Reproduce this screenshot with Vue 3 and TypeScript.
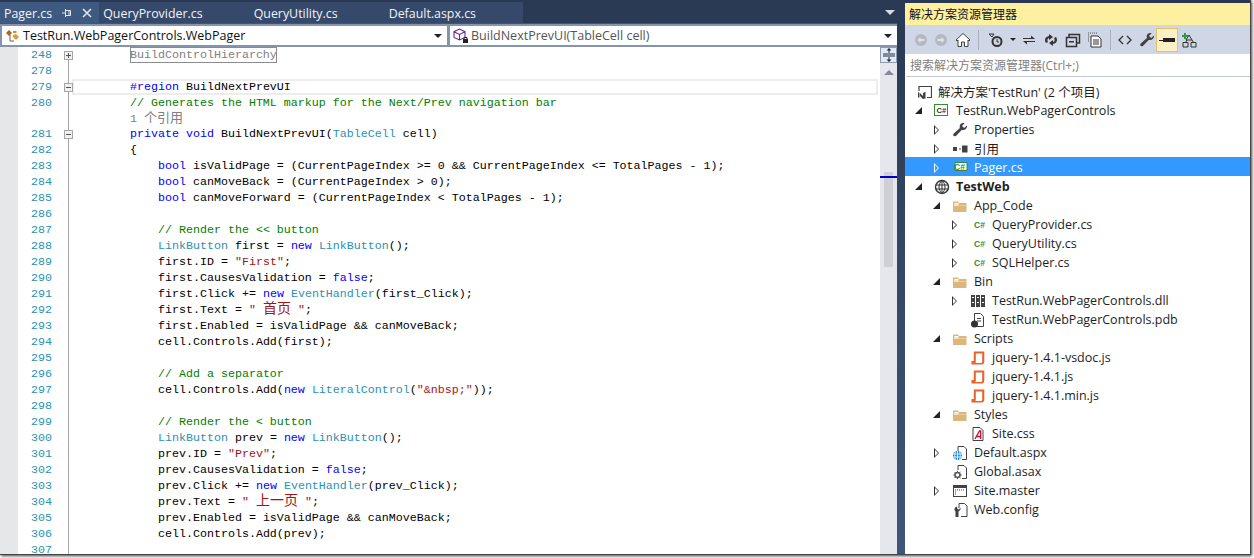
<template>
  <div class="shot">
    <svg class="sprite" width="0" height="0">
      <defs>
        <symbol id="i-folder" viewBox="0 0 16 16">
          <path d="M1 3.500h5l1 1.500h7.500v9H1z" fill="#dcb67a" />
          <path d="M2 6h5l-1 1.500h8v.5H2z" fill="#f4e4c4" />
          <path d="M2.500 5h3.500l1 1H2.500z" fill="#fff" />
        </symbol>
        <symbol id="i-csproj" viewBox="0 0 16 16">
          <rect x=".5" y="1.500" width="13" height="11" fill="#fff" stroke="#388a34" />
          <text x="2.600" y="10" font-size="7.500" font-weight="700" fill="#333" font-family="Liberation Sans">C#</text>
        </symbol>
        <symbol id="i-cs" viewBox="0 0 16 16">
          <text x="4" y="10.500" font-size="8.500" font-weight="700" fill="#388a34" font-family="Liberation Sans">C#</text>
        </symbol>
        <symbol id="i-csfile" viewBox="0 0 16 16">
          <path d="M3 2.500h12v8H3z" fill="#fff" stroke="#388a34" />
          <text x="2" y="10" font-size="8.500" font-weight="700" fill="#388a34" font-family="Liberation Sans">C#</text>
        </symbol>
        <symbol id="i-wrench" viewBox="0 0 16 16">
          <path d="M15 3.500 12.200 6 10 4l2.600-2.700C10.400.5 8 1.600 7.700 4c-.1.7 0 1.300.2 1.900L1.500 11.800c-1.200 1.500.9 3.400 2.400 2.100l5.800-6c2.800.8 5.700-1.300 5.300-4.400z" fill="#424242" />
        </symbol>
        <symbol id="i-ref" viewBox="0 0 16 16">
          <path d="M1 6h4v4H1zM7 7.500h2v1H7zM10 4.500h5.500v7H10z" fill="#424242" />
        </symbol>
        <symbol id="i-globe" viewBox="0 0 16 16">
          <circle cx="8" cy="8" r="6.500" fill="#fff" stroke="#333" stroke-width="1.400" />
          <path d="M1.500 6h13M1.500 10h13M8 1.500v13M8 1.500c-4 3.500-4 9.500 0 13M8 1.500c4 3.500 4 9.500 0 13" fill="none" stroke="#333" />
        </symbol>
        <symbol id="i-dll" viewBox="0 0 16 16">
          <path d="M1 2h4v12H1zM6 2h4v12H6zM11 2h4v12h-4z" fill="#424242" />
          <path d="M2 4h2v1H2zM7 4h2v1H7zM12 4h2v1h-2zM2 9h2v1H2zM7 9h2v1H7zM12 9h2v1h-2z" fill="#fff" />
        </symbol>
        <symbol id="i-pdb" viewBox="0 0 16 16">
          <path d="M4.500 1.500h6l3 3v10h-9z" fill="#fff" stroke="#424242" />
          <path d="M7 6h4v1H7zM7 8.500h4v1H7z" fill="#424242" />
          <circle cx="4.500" cy="12" r="3.500" fill="#333" />
        </symbol>
        <symbol id="i-js" viewBox="0 0 16 16">
          <path d="M1.500 14.500V11h2.300V1.500h10.500V11c0 2.500-1 3.500-2.500 3.500zM5.800 3.500V11.500c0 .6-.1 1.100-.3 1.500h6c.4-.4.700-1 .700-2V3.500z" fill="#e8622c" />
        </symbol>
        <symbol id="i-css" viewBox="0 0 16 16">
          <path d="M3 1.500h7l3 3v10H3z" fill="#fff" stroke="#424242" />
          <path d="M5 13 9.500 5h1.200v8M7 10.500h3.700" fill="none" stroke="#c8102e" stroke-width="1.300" />
        </symbol>
        <symbol id="i-aspx" viewBox="0 0 16 16">
          <path d="M6 6V1.500h6l2.500 2.500v10.500H10" fill="#fff" stroke="#424242" />
          <circle cx="5.500" cy="10.500" r="4.500" fill="#1e88d8" />
          <path d="M1 9h9M1 12h9M5.500 6v9M3.500 6.500c-1 2.500-1 5.500 0 8M7.500 6.500c1 2.500 1 5.500 0 8" fill="none" stroke="#fff" stroke-width=".8" />
        </symbol>
        <symbol id="i-asax" viewBox="0 0 16 16">
          <path d="M6 6V1.500h6l2.500 2.500v10.500H10" fill="#fff" stroke="#424242" />
          <circle cx="5.500" cy="11" r="2.500" fill="none" stroke="#5a5a5a" stroke-width="1.600" />
          <path d="M5.500 6.800v2M5.500 13.200v2M1.300 11h2M7.700 11h2M2.500 8l1.400 1.400M7 12.600 8.500 14M8.500 8 7 9.400M3.900 12.600 2.500 14" stroke="#5a5a5a" />
        </symbol>
        <symbol id="i-master" viewBox="0 0 16 16">
          <rect x="1.500" y="2.500" width="13" height="11" fill="#fff" stroke="#424242" />
          <path d="M1.500 2.500h13v2.500h-13z" fill="#424242" />
          <path d="M3 7h1M5 7h1M7 7h1M9 7h1M11 7h1M3 9h1M3 11h1" stroke="#424242" />
        </symbol>
        <symbol id="i-config" viewBox="0 0 16 16">
          <path d="M7 6V1.500h5.500L15 4v10.500H9" fill="#fff" stroke="#424242" />
          <path d="M8.500 5.500 7 7.500 5.500 7 5 4.500C2.500 5 1.500 7.500 3.500 9.500v5.500h3V9.500c1.800-1 2.200-2.500 2-4z" fill="#424242" />
        </symbol>
        <symbol id="i-solution" viewBox="0 0 16 16">
          <path d="M3 7V2.500h12.500v11H11" fill="none" stroke="#424242" stroke-width="1.200" />
          <path d="M2 8v6l1.500-1V9zM4 9l3 3V9l2.500-1.200v6.700L7 15l-3-3z" fill="#424242" />
        </symbol>
      </defs>
    </svg>

    <div class="frame">
      <section class="doc">
        <div class="tabstrip">
          <div class="tabs">
            <div v-for="(t, i) in tabs" :key="t" class="tab" :class="{ active: i === 0 }">
              <span>{{ t }}</span>
              <span class="tab-tools">
                <svg v-if="i === 0" width="12" height="12" viewBox="0 0 12 12">
                  <path d="M1 6h3M4.500 3.500h5v5h-5zM4.500 2v8M8 3.500v5" fill="none" stroke="#dfe6f0" />
                </svg>
                <svg v-if="i === 0" width="12" height="12" viewBox="0 0 12 12">
                  <path d="M2 2l8 8M10 2l-8 8" stroke="#dfe6f0" stroke-width="1.600" />
                </svg>
              </span>
            </div>
          </div>
          <i class="strip-drop"></i>
        </div>
        <div class="navbar">
          <div class="combo first">
            <svg width="16" height="16" viewBox="0 0 16 16">
              <path d="M1 5l3-3 3 3-3 3z" fill="#a8652a" />
              <path d="M8 3h3l1 1-1 1H8z" fill="#d98a2f" />
              <path d="M8 7l3-1 3 3-3 3-3-3z" fill="#e09a3c" />
              <path d="M5 7v6h4" fill="none" stroke="#8a5a2a" />
            </svg>
            <span class="combo-text">TestRun.WebPagerControls.WebPager</span>
            <i class="drop"></i>
          </div>
          <div class="combo second">
            <svg width="16" height="16" viewBox="0 0 16 16">
              <path d="M6.500 1 12 3.700v5.800L6.500 12 1 9.500V3.700zM1 3.700l5.500 2.800L12 3.700M6.500 6.500V12" fill="#fff" stroke="#6a2c91" stroke-width="1.100" />
              <rect x="10" y="11" width="5" height="4" fill="#222" />
              <path d="M11 11V9.500h3V11" fill="none" stroke="#222" />
            </svg>
            <span class="combo-text dim">BuildNextPrevUI(TableCell cell)</span>
            <i class="drop"></i>
          </div>
        </div>
        <div class="editor">
          <div class="code">
            <div
              v-for="(l, i) in codeLines"
              :key="i"
              class="line"
              :class="{ current: l.no === '279', short: l.no === '' }"
            >
              <span class="no">{{ l.no }}</span>
              <span class="fold" :class="{ start: i === 0 }">
                <i v-if="l.fold" class="fold-box" :class="{ plus: l.fold === '+' }"></i>
              </span>
              <span class="src"><span v-for="(t, j) in l.tokens" :key="j" :class="t.cls">{{ t.text }}</span></span>
            </div>
          </div>
          <div class="vscroll">
            <div class="split">
              <svg width="14" height="14" viewBox="0 0 14 14">
                <path d="M1 6h12M1 8h12" stroke="#1f2a3f" />
                <path d="M7 0l2.500 2.500h-2V5h-1V2.500h-2zM7 14l2.500-2.500h-2V9h-1v2.500h-2z" fill="#1f2a3f" />
              </svg>
            </div>
            <i class="up"></i>
            <div class="thumb"></div>
            <i class="caret-mark"></i>
          </div>
        </div>
      </section>

      <aside class="panel">
        <div class="panel-title">解决方案资源管理器</div>
        <div class="toolbar">
          <svg class="tb nav" width="16" height="16" viewBox="0 0 16 16"><circle cx="8" cy="8" r="6" fill="#b4b8c0" /><path d="M4.500 8l3-3v2h4v2h-4v2z" fill="#dfe3ec" /></svg>
          <svg class="tb" width="16" height="16" viewBox="0 0 16 16"><circle cx="8" cy="8" r="6" fill="#b4b8c0" /><path d="M11.500 8l-3-3v2h-4v2h4v2z" fill="#dfe3ec" /></svg>
          <svg class="tb" width="16" height="16" viewBox="0 0 16 16"><path d="M8 1.500 15 8l-1 1-1-1v6.500H9.500V10h-3v4.500H3V8L2 9 1 8z" fill="#fff" stroke="#424242" /></svg>
          <i class="tb-sep left"></i>
          <svg class="tb" width="18" height="16" viewBox="0 0 18 16"><circle cx="9" cy="9.500" r="4.500" fill="none" stroke="#333" stroke-width="2" /><path d="M9 7v3h2M1 2h5l-2 3z" fill="none" stroke="#333" /></svg>
          <i class="tb-drop"></i>
          <svg class="tb" width="16" height="16" viewBox="0 0 16 16"><path d="M2 6h8V3.500L14 7H2zM14 10H6v2.500L2 9h12z" fill="#333" /></svg>
          <svg class="tb" width="16" height="16" viewBox="0 0 16 16"><path d="M3 11c-2-3-1-6 3-7V2l4 3-4 3V6C4 6.500 4 8.500 5 10zM13 5c2 3 1 6-3 7v2l-4-3 4-3v2c2-.5 2-2.500 1-4z" fill="#333" /></svg>
          <svg class="tb" width="16" height="16" viewBox="0 0 16 16"><path d="M1.500 5.500h10v9h-10zM4 5V2.500h10.500V11H12" fill="none" stroke="#333" stroke-width="1.500" /><path d="M4 9h5v1.500H4z" fill="#333" /></svg>
          <svg class="tb" width="16" height="16" viewBox="0 0 16 16"><path d="M1 1h1M3 1h1M5 1h1M7 1h1M9 1h1M1 3h1M1 5h1M1 7h1M1 9h1" stroke="#555" /><path d="M4 4h7l3 3v8H4z" fill="#fff" stroke="#333" /><path d="M6 8h6M6 10h6M6 12h6" stroke="#333" /></svg>
          <i class="tb-sep right"></i>
          <svg class="tb" width="16" height="16" viewBox="0 0 16 16"><path d="M6 4 2 8l4 4M10 4l4 4-4 4" fill="none" stroke="#333" stroke-width="1.300" /></svg>
          <svg class="tb" width="16" height="16" viewBox="0 0 16 16"><use href="#i-wrench" /></svg>
          <div class="tb-active">
            <svg width="16" height="16" viewBox="0 0 16 16"><path d="M0 8h4v1H0z" fill="#222" /><path d="M4 6h12v4H4z" fill="#222" /></svg>
          </div>
          <svg class="tb" width="16" height="16" viewBox="0 0 16 16"><path d="M5 8h6L8 3zM2 10.500h5v4.500H2zM10 10.500h5v4.500h-5zM4.500 10.500 6 8M12.500 10.500 11 8" fill="none" stroke="#333" /><path d="M3 1h2v2h2v2H5v2H3V5H1V3h2z" fill="#2e9a3e" /></svg>
        </div>
        <div class="search">搜索解决方案资源管理器(Ctrl+;)</div>
        <div class="tree">
          <div
            v-for="n in nodes"
            :key="n.label"
            class="node"
            :class="{ selected: n.selected, bold: n.bold }"
            :style="{ paddingLeft: (n.level < 0 ? 11 : 8 + n.level * 18) + 'px' }"
          >
            <i v-if="n.level >= 0" class="arrow" :class="n.arrow"></i>
            <svg class="node-icon" width="16" height="16"><use :href="'#i-' + n.icon" /></svg>
            <span>{{ n.label }}</span>
          </div>
        </div>
      </aside>
    </div>
  </div>
</template>

<script setup lang="ts">
interface Token {
  cls: string
  text: string
}

interface TreeNode {
  label: string
  icon: string
  level: number
  arrow?: 'open' | 'closed'
  selected?: boolean
  bold?: boolean
}

const tabs = ['Pager.cs', 'QueryProvider.cs', 'QueryUtility.cs', 'Default.aspx.cs']

const pad = '        '
const rawLines: [string, string, string?][] = [
  ['248', pad + '@@BuildControlHierarchy', '+'],
  ['278', ''],
  ['279', pad + '#region BuildNextPrevUI', '-'],
  ['280', pad + '// Generates the HTML markup for the Next/Prev navigation bar'],
  ['', pad + '%%1 个引用'],
  ['281', pad + 'private void BuildNextPrevUI(TableCell cell)', '-'],
  ['282', pad + '{'],
  ['283', pad + '    bool isValidPage = (CurrentPageIndex >= 0 && CurrentPageIndex <= TotalPages - 1);'],
  ['284', pad + '    bool canMoveBack = (CurrentPageIndex > 0);'],
  ['285', pad + '    bool canMoveForward = (CurrentPageIndex < TotalPages - 1);'],
  ['286', ''],
  ['287', pad + '    // Render the << button'],
  ['288', pad + '    LinkButton first = new LinkButton();'],
  ['289', pad + '    first.ID = "First";'],
  ['290', pad + '    first.CausesValidation = false;'],
  ['291', pad + '    first.Click += new EventHandler(first_Click);'],
  ['292', pad + '    first.Text = " 首页 ";'],
  ['293', pad + '    first.Enabled = isValidPage && canMoveBack;'],
  ['294', pad + '    cell.Controls.Add(first);'],
  ['295', ''],
  ['296', pad + '    // Add a separator'],
  ['297', pad + '    cell.Controls.Add(new LiteralControl("&nbsp;"));'],
  ['298', ''],
  ['299', pad + '    // Render the < button'],
  ['300', pad + '    LinkButton prev = new LinkButton();'],
  ['301', pad + '    prev.ID = "Prev";'],
  ['302', pad + '    prev.CausesValidation = false;'],
  ['303', pad + '    prev.Click += new EventHandler(prev_Click);'],
  ['304', pad + '    prev.Text = " 上一页 ";'],
  ['305', pad + '    prev.Enabled = isValidPage && canMoveBack;'],
  ['306', pad + '    cell.Controls.Add(prev);'],
  ['307', ''],
]

// small highlighter, good enough for the C# on screen
const tokenRe = /("[^"]*")|\b(bool|new|false|private|void)\b|\b(LinkButton|EventHandler|TableCell|LiteralControl)\b/g

function tokenize(src: string): Token[] {
  const indent = src.match(/^ */)![0]
  const body = src.slice(indent.length)
  const out: Token[] = [{ cls: '', text: indent }]
  if (body.startsWith('@@')) {
    out.push({ cls: 'collapsed', text: body.slice(2) })
  } else if (body.startsWith('%%')) {
    out.push({ cls: 'lens', text: body.slice(2) })
  } else if (body.startsWith('//')) {
    out.push({ cls: 'comment', text: body })
  } else if (body.startsWith('#region')) {
    out.push({ cls: 'kw', text: '#region' }, { cls: '', text: body.slice(7) })
  } else {
    let last = 0
    for (const m of body.matchAll(tokenRe)) {
      if (m.index > last) out.push({ cls: '', text: body.slice(last, m.index) })
      out.push({ cls: m[1] ? 'str' : m[2] ? 'kw' : 'type', text: m[0] })
      last = m.index + m[0].length
    }
    out.push({ cls: '', text: body.slice(last) })
  }
  return out.flatMap(splitCjk)
}

// Chinese runs are set larger so each glyph is two mono cells wide
function splitCjk(t: Token): Token[] {
  return t.text
    .split(/([\u4e00-\u9fff]+)/)
    .filter(Boolean)
    .map((text) => ({ text, cls: /[\u4e00-\u9fff]/.test(text) ? t.cls + ' cjk' : t.cls }))
}

const codeLines = rawLines.map(([no, src, fold]) => ({ no, fold, tokens: tokenize(src) }))

const nodes: TreeNode[] = [
  { label: "解决方案'TestRun' (2 个项目)", icon: 'solution', level: -1 },
  { label: 'TestRun.WebPagerControls', icon: 'csproj', level: 0, arrow: 'open' },
  { label: 'Properties', icon: 'wrench', level: 1, arrow: 'closed' },
  { label: '引用', icon: 'ref', level: 1, arrow: 'closed' },
  { label: 'Pager.cs', icon: 'csfile', level: 1, arrow: 'closed', selected: true },
  { label: 'TestWeb', icon: 'globe', level: 0, arrow: 'open', bold: true },
  { label: 'App_Code', icon: 'folder', level: 1, arrow: 'open' },
  { label: 'QueryProvider.cs', icon: 'cs', level: 2, arrow: 'closed' },
  { label: 'QueryUtility.cs', icon: 'cs', level: 2, arrow: 'closed' },
  { label: 'SQLHelper.cs', icon: 'cs', level: 2, arrow: 'closed' },
  { label: 'Bin', icon: 'folder', level: 1, arrow: 'open' },
  { label: 'TestRun.WebPagerControls.dll', icon: 'dll', level: 2, arrow: 'closed' },
  { label: 'TestRun.WebPagerControls.pdb', icon: 'pdb', level: 2 },
  { label: 'Scripts', icon: 'folder', level: 1, arrow: 'open' },
  { label: 'jquery-1.4.1-vsdoc.js', icon: 'js', level: 2 },
  { label: 'jquery-1.4.1.js', icon: 'js', level: 2 },
  { label: 'jquery-1.4.1.min.js', icon: 'js', level: 2 },
  { label: 'Styles', icon: 'folder', level: 1, arrow: 'open' },
  { label: 'Site.css', icon: 'css', level: 2 },
  { label: 'Default.aspx', icon: 'aspx', level: 1, arrow: 'closed' },
  { label: 'Global.asax', icon: 'asax', level: 1 },
  { label: 'Site.master', icon: 'master', level: 1, arrow: 'closed' },
  { label: 'Web.config', icon: 'config', level: 1 },
]
</script>

<style scoped>
.shot {
  width: 1254px;
  height: 558px;
  overflow: hidden;
  background: #fff;
  font-family: "Open Sans", "Noto Sans CJK SC", sans-serif;
  font-size: 12px;
  color: #1e1e1e;
}

.sprite {
  display: none;
}

.frame {
  width: 1251px;
  height: 555px;
  display: flex;
  background: linear-gradient(#2a3953, #3f5679);
  border-right: 1px solid #444;
  border-bottom: 1px solid #444;
  box-sizing: border-box;
  box-shadow: 1px 1px 3px rgba(0, 0, 0, 0.75);
}

.doc {
  width: 897px;
  flex: none;
  display: flex;
  flex-direction: column;
  min-height: 0;
}

.tabstrip {
  height: 23px;
  padding-top: 2px;
  box-sizing: border-box;
  flex: none;
  display: flex;
  justify-content: space-between;
}

.tabs {
  display: flex;
}

.tab {
  display: flex;
  align-items: center;
  padding: 1px 0 0 4px;
  background: #36496b;
  color: #f1f4f8;
  font-size: 12.4px;
}

.tab.active {
  background: #3f5a80;
}

.tab-tools {
  width: 47px;
  display: flex;
  gap: 8px;
  padding-left: 9px;
  box-sizing: border-box;
}

.strip-drop {
  border: 5px solid transparent;
  border-top-color: #d5dbe6;
  border-bottom: 0;
  align-self: center;
  margin-right: 2px;
}

.navbar {
  flex: none;
  height: 24px;
  display: flex;
  gap: 3px;
  padding: 2px 0 2px 2px;
  box-sizing: border-box;
  background: #8494ac;
  border-top: 1px solid #3f5679;
}

.combo {
  background: #fff;
  display: flex;
  align-items: center;
  gap: 2px;
  padding: 0 3px;
  box-sizing: border-box;
}

.combo.first {
  width: 445px;
}

.combo.second {
  width: 447px;
}

.combo-text {
  flex: 1;
  font-size: 12.5px;
  color: #111;
}

.combo-text.dim {
  color: #555;
}

.drop {
  border: 4px solid transparent;
  border-top-color: #222;
  border-bottom: 0;
  margin-right: 2px;
}

.editor {
  flex: 1;
  min-height: 0;
  display: flex;
  background: #fff;
  overflow: hidden;
}

.code {
  flex: 1;
  min-width: 0;
  overflow: hidden;
  font-family: "Liberation Mono", monospace;
  font-size: 11.67px;
  color: #000;
  border-left: 18px solid #e6e7e8;
}

.line {
  height: 16px;
  display: flex;
  line-height: 16px;
}

.line.short {
  height: 15px;
}

.no {
  width: 34px;
  flex: none;
  text-align: right;
  color: #2b91af;
}

.fold {
  width: 22px;
  flex: none;
  position: relative;
  background: linear-gradient(#a5a5a5, #a5a5a5) 16px 0 / 1px 100% no-repeat;
}

.fold.start {
  background-position: 16px 12px;
}

.fold-box {
  position: absolute;
  left: 12px;
  top: 4px;
  width: 7px;
  height: 7px;
  background: linear-gradient(#555, #555) center / 5px 1px no-repeat, #f0f0f0;
  border: 1px solid #a5a5a5;
}

.fold-box.plus {
  background:
    linear-gradient(#555, #555) center / 5px 1px no-repeat,
    linear-gradient(#555, #555) center / 1px 5px no-repeat,
    #f0f0f0;
}

.src {
  flex: 1;
  white-space: pre;
  font-family: "Liberation Mono", "Noto Sans CJK SC", monospace;
}

.line.current .src {
  margin: 0 2px 0 -2px;
  padding-left: 2px;
  box-shadow: inset 0 0 0 2px #ededed;
}

.cjk {
  font-size: 14px;
  line-height: 1;
}

.lens.cjk {
  font-size: 13px;
}

.kw {
  color: #0000ff;
}

.type {
  color: #2b91af;
}

.str {
  color: #a31515;
}

.comment {
  color: #008000;
}

.lens {
  color: #808080;
}

.collapsed {
  color: #808080;
  outline: 1px solid #8c8c8c;
  outline-offset: -1px;
  display: inline-block;
  height: 16px;
}

.vscroll {
  width: 17px;
  flex: none;
  background: #e6e7ed;
  position: relative;
  display: flex;
  flex-direction: column;
  align-items: center;
}

.split {
  width: 17px;
  height: 16px;
  box-sizing: border-box;
  border: 1px solid #8f9bb0;
  background: #e4e9f8;
  display: flex;
  align-items: center;
  justify-content: center;
}

.up {
  margin-top: 7px;
  border: 5px solid transparent;
  border-bottom-color: #868999;
  border-top: 0;
}

.thumb {
  margin-top: 97px;
  width: 9px;
  height: 95px;
  background: #cfd0d5;
}

.caret-mark {
  position: absolute;
  left: 0;
  right: 0;
  top: 129px;
  height: 2px;
  background: #0000cc;
}

.panel {
  margin-left: 8px;
  margin-top: 3px;
  flex: 1;
  min-width: 0;
  display: flex;
  flex-direction: column;
  background: #fff;
}

.panel-title {
  height: 22px;
  flex: none;
  line-height: 24px;
  padding-left: 4px;
  background: #fdf0a0;
  color: #111;
}

.toolbar {
  height: 29px;
  flex: none;
  background: #cfd6e5;
  display: flex;
  align-items: center;
  padding-left: 8px;
  gap: 6px;
}

.tb.nav {
  margin-right: -2px;
}

.tb-sep {
  width: 1px;
  height: 20px;
  background: #a8afc0;
}

.tb-sep.left {
  margin: 0 3px 0 1px;
}

.tb-sep.right {
  margin: 0 0 0 1px;
}

.tb-drop {
  border: 3px solid transparent;
  border-top-color: #222;
  border-bottom: 0;
  margin: 0 -1px 0 -2px;
}

.tb-active {
  width: 22px;
  height: 24px;
  box-sizing: border-box;
  background: #fdf0c4;
  border: 1px solid #e5c365;
  display: flex;
  align-items: center;
  justify-content: center;
  margin: 0 -3px 0 -5px;
}

.search {
  height: 23px;
  flex: none;
  box-sizing: border-box;
  margin: 0 0 0 1px;
  line-height: 24px;
  padding-left: 4px;
  background: #fff;
  color: #808080;
  border-bottom: 1px solid #c0c7d6;
}

.tree {
  padding-top: 4px;
}

.node {
  height: 19px;
  display: flex;
  align-items: center;
  box-sizing: border-box;
  padding-top: 2px;
  white-space: nowrap;
  font-size: 12.5px;
}

.node.selected {
  background: #3399ff;
  color: #fff;
}

.node.bold {
  font-weight: 700;
}

.arrow {
  width: 12px;
  height: 12px;
  flex: none;
  margin-right: 9px;
  position: relative;
}

.arrow.closed::before {
  content: "";
  position: absolute;
  left: 3px;
  top: 1px;
  border: 5px solid transparent;
  border-left-color: #333;
  border-right: 0;
}

.arrow.closed::after {
  content: "";
  position: absolute;
  left: 4px;
  top: 3px;
  border: 3px solid transparent;
  border-left-color: #fff;
  border-right: 0;
}

.selected .arrow.closed::before {
  border-left-color: #fff;
}

.selected .arrow.closed::after {
  border-left-color: #3399ff;
}

.arrow.open::before {
  content: "";
  position: absolute;
  left: 2px;
  top: 2px;
  border-style: solid;
  border-width: 0 0 7px 7px;
  border-color: transparent transparent #222 transparent;
}

.node-icon {
  flex: none;
  margin-right: 6px;
}
</style>
